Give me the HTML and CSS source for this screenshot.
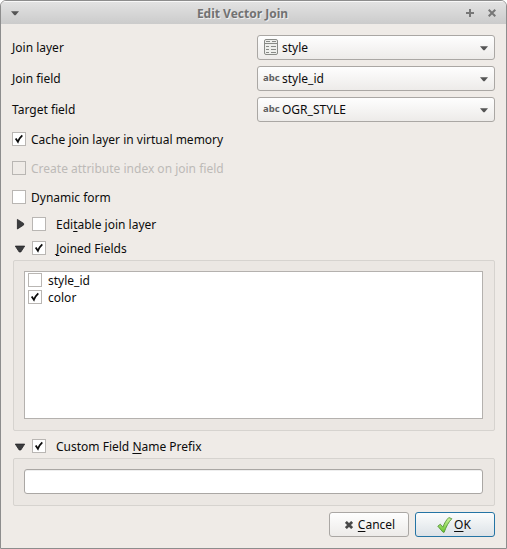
FILE: index.html
```html
<!DOCTYPE html>
<html lang="en">
<head>
<meta charset="utf-8">
<title>Edit Vector Join</title>
<link rel="stylesheet" href="styles.css">
</head>
<body>
<svg width="0" height="0" class="defs">
  <symbol id="check" viewBox="0 0 12 12"><path d="M2.7 5.5 L4.9 8.8 C5.7 6.5 7 4.4 9.3 2.3" fill="none" stroke="#0c0c0c" stroke-width="1.8"/></symbol>
  <symbol id="down" viewBox="0 0 8 5"><path d="M0 .3H8L4.6 4.3H3.4Z" fill="#555"/></symbol>
  <symbol id="expanded" viewBox="0 0 12 8"><path d="M1.3 1.1H10.7L6.8 7H5.2Z" fill="#3b3c3e" stroke="#242527" stroke-width=".8"/></symbol>
</svg>
<div class="window">
  <header class="titlebar">
    <svg class="menu" width="8" height="5"><use href="#down"/></svg>
    <h1>Edit Vector Join</h1>
    <svg class="plus" width="8" height="8"><path d="M4 0V8M0 4H8" stroke="#777" stroke-width="2"/></svg>
    <svg class="close" width="8" height="8"><path d="M.7 .7L7.3 7.3M7.3 .7L.7 7.3" stroke="#777" stroke-width="2"/></svg>
  </header>
  <main>
    <div class="field"><label>Join layer</label>
      <div class="combo">
        <svg class="table" width="14" height="16" viewBox="0 0 14 16"><rect x=".5" y=".5" width="13" height="15" rx="1.5" fill="#eeefec" stroke="#898b87"/><path d="M1 4.5H13M2 2.5H6M8 2.5H12M2 7.5H5M7 7.5H12M2 10.5H5M7 10.5H12M2 13.5H5M7 13.5H12" stroke="#898b87" fill="none"/></svg>
        <span>style</span><svg class="arrow" width="8" height="5"><use href="#down"/></svg>
      </div>
    </div>
    <div class="field"><label>Join field</label>
      <div class="combo"><b>abc</b><span>style_id</span><svg class="arrow" width="8" height="5"><use href="#down"/></svg></div>
    </div>
    <div class="field"><label>Target field</label>
      <div class="combo"><b>abc</b><span>OGR_STYLE</span><svg class="arrow" width="8" height="5"><use href="#down"/></svg></div>
    </div>
    <div class="options">
      <div class="option"><i class="box"><svg width="12" height="12"><use href="#check"/></svg></i>Cache join layer in virtual memory</div>
      <div class="option disabled"><i class="box"></i>Create attribute index on join field</div>
      <div class="option"><i class="box"></i>Dynamic form</div>
    </div>
    <div class="group-title editable"><svg class="twisty" width="12" height="12"><path d="M3.4 1.4V11L9.6 7V5.4Z" fill="#3b3c3e" stroke="#242527" stroke-width=".8"/></svg><i class="box"></i><span>Edi<u>t</u>able join layer</span></div>
    <div class="group-title joined"><svg class="twisty" width="12" height="8"><use href="#expanded"/></svg><i class="box"><svg width="12" height="12"><use href="#check"/></svg></i><span><u>J</u>oined Fields</span></div>
    <section class="panel fields">
      <div class="list">
        <div class="item"><i class="box"></i>style_id</div>
        <div class="item"><i class="box"><svg width="12" height="12"><use href="#check"/></svg></i>color</div>
      </div>
    </section>
    <div class="group-title custom"><svg class="twisty" width="12" height="8"><use href="#expanded"/></svg><i class="box"><svg width="12" height="12"><use href="#check"/></svg></i><span>Custom Field <u>N</u>ame Prefix</span></div>
    <section class="panel prefix"><input type="text" aria-label="Custom Field Name Prefix"></section>
    <footer>
      <button class="cancel"><svg width="8" height="8"><path d="M.9 .9L7.1 7.1M7.1 .9L.9 7.1" stroke="#484848" stroke-width="2.7"/></svg><span><u>C</u>ancel</span></button>
      <button class="ok"><svg width="16" height="16" viewBox="0 0 16 16"><defs><linearGradient id="green" x2="0" y2="1"><stop stop-color="#d0f5a0"/><stop offset="1" stop-color="#68c52c"/></linearGradient></defs><path d="M.8 9.2L3.3 7.2L5.9 10.2C7.4 6.1 9.3 2.9 11.8 .6L14.8 1.7C11.5 5.2 9.2 9.5 7.2 15.2H6Z" fill="url(#green)" stroke="#56943a" stroke-width=".9" stroke-linejoin="round"/></svg><span><u>O</u>K</span></button>
    </footer>
  </main>
</div>
</body>
</html>
```
FILE: styles.css
```css
* { box-sizing: border-box; }
body {
  margin: 0;
  background: #fff;
  color: #0c0c0c;
  font: 12px/17px "Noto Sans", sans-serif;
}
svg { display: block; flex: none; }
.defs { position: absolute; }
.window {
  width: 507px;
  height: 549px;
  border: 1px solid #8d8d8d;
  border-radius: 6px 6px 0 0;
  background: #efebe7;
  overflow: hidden;
}
.titlebar {
  display: grid;
  grid-template-columns: 8px 1fr 8px 14px 8px;
  align-items: center;
  height: 23px;
  padding: 0 10px;
  border-top: 1px solid #f8f8f8;
  background: linear-gradient(#e2e2e2, #cbcbcb);
}
.titlebar .close { grid-column: 5; }
h1 {
  margin: 0;
  padding-top: 1px;
  font-size: 12px;
  line-height: 17px;
  text-align: center;
  color: #727272;
  text-shadow: 1px 1px #eee;
}
main {
  display: flex;
  flex-direction: column;
  padding: 11px 11px 0;
}
.field {
  display: grid;
  grid-template-columns: 245px 238px;
  align-items: center;
  height: 25px;
  margin-bottom: 6px;
}
.combo {
  display: flex;
  align-items: center;
  height: 25px;
  padding: 0 6px 0 5px;
  border: 1px solid #aaa7a4;
  border-radius: 3px;
  background: linear-gradient(#fefefe, #edebe9);
}
.combo .table { margin: -2px 4px 0 1px; }
.combo b {
  width: 19px;
  margin-top: -2px;
  font-size: 9.5px;
  color: #5f5f5f;
}
.combo .arrow { margin: 1px 0 0 auto; }
.options {
  display: flex;
  flex-direction: column;
  gap: 12px;
  margin-top: 3px;
}
.option { display: flex; align-items: center; gap: 5px; }
.box {
  flex: none;
  width: 14px;
  height: 14px;
  border: 1px solid #b9b6b3;
  background: #fff;
}
.option .box, .item .box { margin-bottom: 1px; }
.disabled { color: #bdbab7; }
.disabled .box { background: #efebe7; }
.group-title {
  display: flex;
  align-items: center;
  height: 18px;
  padding-left: 2px;
}
.group-title .box { margin: 0 10px 0 6px; }
.joined .twisty, .custom .twisty { margin-top: 2px; }
u {
  text-decoration-thickness: 1px;
  text-underline-offset: 2px;
  text-decoration-skip-ink: none;
}
.editable { margin-top: 9px; }
.joined { margin-top: 6px; }
.panel {
  width: 482px;
  margin-left: 1px;
  padding: 10px 11px 10px 10px;
  border: 1px solid #d6d3cf;
  border-radius: 2px;
  background: #ebe7e3;
}
.fields { height: 171px; margin-top: 3px; }
.list {
  height: 148px;
  padding: 0 3px;
  border: 1px solid #b4b1ae;
  background: #fff;
}
.item { display: flex; align-items: center; gap: 6px; }
.custom { margin-top: 6px; }
.prefix { height: 48px; margin-top: 3px; }
input {
  display: block;
  width: 459px;
  height: 25px;
  border: 1px solid #aaa7a4;
  border-radius: 3px;
  background: #fff;
  box-shadow: inset 0 1px #eee;
}
footer { display: flex; justify-content: flex-end; gap: 6px; margin-top: 6px; }
button {
  display: flex;
  align-items: center;
  justify-content: center;
  width: 80px;
  height: 25px;
  padding: 0;
  border: 1px solid #aaa7a4;
  border-radius: 3px;
  background: linear-gradient(#fefefe, #edebe9);
  color: inherit;
  font: inherit;
}
.cancel { gap: 5px; }
.cancel span { margin-right: -2px; }
.ok { gap: 1px; padding-right: 2px; border-color: #2474a4; background: linear-gradient(#fbfcfc, #dce2e7); }
```
